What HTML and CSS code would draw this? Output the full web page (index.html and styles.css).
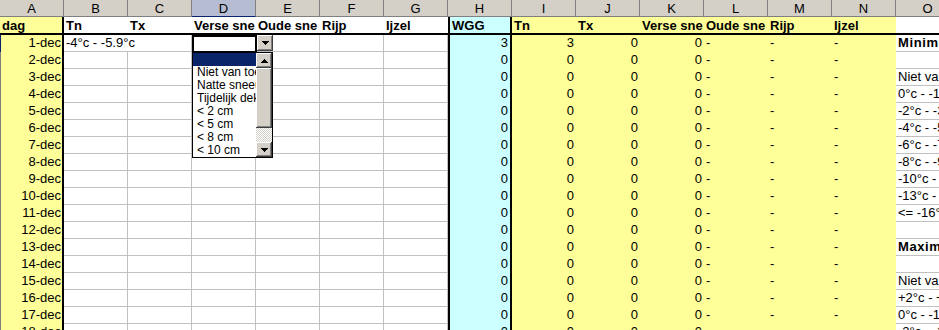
FILE: index.html
```html
<!DOCTYPE html>
<html>
	<head>
		<meta charset=utf-8>
		<title>Sneeuw december</title>
		<link rel="stylesheet" href="styles.css">
	</head>
	<body>
		<div class="sheet">
			<div class="row heads">
				<div class="c">A</div><div class="c">B</div><div class="c">C</div><div class="c on">D</div><div class="c">E</div><div class="c">F</div><div class="c">G</div><div class="c">H</div><div class="c">I</div><div class="c">J</div><div class="c">K</div><div class="c">L</div><div class="c">M</div><div class="c">N</div><div class="c">O</div>
			</div>
			<div class="row labels">
				<div class="c a">dag</div><div class="c">Tn</div><div class="c">Tx</div><div class="c">Verse sne</div><div class="c">Oude sne</div><div class="c">Rijp</div><div class="c">Ijzel</div><div class="c h">WGG</div><div class="c y">Tn</div><div class="c y">Tx</div><div class="c y">Verse sne</div><div class="c y">Oude sne</div><div class="c y">Rijp</div><div class="c y">Ijzel</div><div class="c o"></div>
			</div>

			<div class="row cur"><div class="c a">1-dec</div><div class="c w spill">-4°c - -5.9°c</div><div class="c w"></div><div class="c w"></div><div class="c w"></div><div class="c w"></div><div class="c w"></div><div class="c h">3</div><div class="c y r">3</div><div class="c y r">0</div><div class="c y r">0</div><div class="c y">-</div><div class="c y">-</div><div class="c y">-</div><div class="c o b">Minimumtemperatuur</div></div>
			<div class="row"><div class="c a">2-dec</div><div class="c w"></div><div class="c w"></div><div class="c w"></div><div class="c w"></div><div class="c w"></div><div class="c w"></div><div class="c h">0</div><div class="c y r">0</div><div class="c y r">0</div><div class="c y r">0</div><div class="c y">-</div><div class="c y">-</div><div class="c y">-</div><div class="c o"></div></div>
			<div class="row"><div class="c a">3-dec</div><div class="c w"></div><div class="c w"></div><div class="c w"></div><div class="c w"></div><div class="c w"></div><div class="c w"></div><div class="c h">0</div><div class="c y r">0</div><div class="c y r">0</div><div class="c y r">0</div><div class="c y">-</div><div class="c y">-</div><div class="c y">-</div><div class="c o">Niet van toepassing</div></div>
			<div class="row"><div class="c a">4-dec</div><div class="c w"></div><div class="c w"></div><div class="c w"></div><div class="c w"></div><div class="c w"></div><div class="c w"></div><div class="c h">0</div><div class="c y r">0</div><div class="c y r">0</div><div class="c y r">0</div><div class="c y">-</div><div class="c y">-</div><div class="c y">-</div><div class="c o">0°c - -1.9°c</div></div>
			<div class="row"><div class="c a">5-dec</div><div class="c w"></div><div class="c w"></div><div class="c w"></div><div class="c w"></div><div class="c w"></div><div class="c w"></div><div class="c h">0</div><div class="c y r">0</div><div class="c y r">0</div><div class="c y r">0</div><div class="c y">-</div><div class="c y">-</div><div class="c y">-</div><div class="c o">-2°c - -3.9°c</div></div>
			<div class="row"><div class="c a">6-dec</div><div class="c w"></div><div class="c w"></div><div class="c w"></div><div class="c w"></div><div class="c w"></div><div class="c w"></div><div class="c h">0</div><div class="c y r">0</div><div class="c y r">0</div><div class="c y r">0</div><div class="c y">-</div><div class="c y">-</div><div class="c y">-</div><div class="c o">-4°c - -5.9°c</div></div>
			<div class="row"><div class="c a">7-dec</div><div class="c w"></div><div class="c w"></div><div class="c w"></div><div class="c w"></div><div class="c w"></div><div class="c w"></div><div class="c h">0</div><div class="c y r">0</div><div class="c y r">0</div><div class="c y r">0</div><div class="c y">-</div><div class="c y">-</div><div class="c y">-</div><div class="c o">-6°c - -7.9°c</div></div>
			<div class="row"><div class="c a">8-dec</div><div class="c w"></div><div class="c w"></div><div class="c w"></div><div class="c w"></div><div class="c w"></div><div class="c w"></div><div class="c h">0</div><div class="c y r">0</div><div class="c y r">0</div><div class="c y r">0</div><div class="c y">-</div><div class="c y">-</div><div class="c y">-</div><div class="c o">-8°c - -9.9°c</div></div>
			<div class="row"><div class="c a">9-dec</div><div class="c w"></div><div class="c w"></div><div class="c w"></div><div class="c w"></div><div class="c w"></div><div class="c w"></div><div class="c h">0</div><div class="c y r">0</div><div class="c y r">0</div><div class="c y r">0</div><div class="c y">-</div><div class="c y">-</div><div class="c y">-</div><div class="c o">-10°c - -12.9°c</div></div>
			<div class="row"><div class="c a">10-dec</div><div class="c w"></div><div class="c w"></div><div class="c w"></div><div class="c w"></div><div class="c w"></div><div class="c w"></div><div class="c h">0</div><div class="c y r">0</div><div class="c y r">0</div><div class="c y r">0</div><div class="c y">-</div><div class="c y">-</div><div class="c y">-</div><div class="c o">-13°c - -15.9°c</div></div>
			<div class="row"><div class="c a">11-dec</div><div class="c w"></div><div class="c w"></div><div class="c w"></div><div class="c w"></div><div class="c w"></div><div class="c w"></div><div class="c h">0</div><div class="c y r">0</div><div class="c y r">0</div><div class="c y r">0</div><div class="c y">-</div><div class="c y">-</div><div class="c y">-</div><div class="c o">&lt;= -16°c</div></div>
			<div class="row"><div class="c a">12-dec</div><div class="c w"></div><div class="c w"></div><div class="c w"></div><div class="c w"></div><div class="c w"></div><div class="c w"></div><div class="c h">0</div><div class="c y r">0</div><div class="c y r">0</div><div class="c y r">0</div><div class="c y">-</div><div class="c y">-</div><div class="c y">-</div><div class="c o"></div></div>
			<div class="row"><div class="c a">13-dec</div><div class="c w"></div><div class="c w"></div><div class="c w"></div><div class="c w"></div><div class="c w"></div><div class="c w"></div><div class="c h">0</div><div class="c y r">0</div><div class="c y r">0</div><div class="c y r">0</div><div class="c y">-</div><div class="c y">-</div><div class="c y">-</div><div class="c o b">Maximumtemperatuur</div></div>
			<div class="row"><div class="c a">14-dec</div><div class="c w"></div><div class="c w"></div><div class="c w"></div><div class="c w"></div><div class="c w"></div><div class="c w"></div><div class="c h">0</div><div class="c y r">0</div><div class="c y r">0</div><div class="c y r">0</div><div class="c y">-</div><div class="c y">-</div><div class="c y">-</div><div class="c o"></div></div>
			<div class="row"><div class="c a">15-dec</div><div class="c w"></div><div class="c w"></div><div class="c w"></div><div class="c w"></div><div class="c w"></div><div class="c w"></div><div class="c h">0</div><div class="c y r">0</div><div class="c y r">0</div><div class="c y r">0</div><div class="c y">-</div><div class="c y">-</div><div class="c y">-</div><div class="c o">Niet van toepassing</div></div>
			<div class="row"><div class="c a">16-dec</div><div class="c w"></div><div class="c w"></div><div class="c w"></div><div class="c w"></div><div class="c w"></div><div class="c w"></div><div class="c h">0</div><div class="c y r">0</div><div class="c y r">0</div><div class="c y r">0</div><div class="c y">-</div><div class="c y">-</div><div class="c y">-</div><div class="c o">+2°c - +0.1°c</div></div>
			<div class="row"><div class="c a">17-dec</div><div class="c w"></div><div class="c w"></div><div class="c w"></div><div class="c w"></div><div class="c w"></div><div class="c w"></div><div class="c h">0</div><div class="c y r">0</div><div class="c y r">0</div><div class="c y r">0</div><div class="c y">-</div><div class="c y">-</div><div class="c y">-</div><div class="c o">0°c - -1.9°c</div></div>
			<div class="row"><div class="c a">18-dec</div><div class="c w"></div><div class="c w"></div><div class="c w"></div><div class="c w"></div><div class="c w"></div><div class="c w"></div><div class="c h">0</div><div class="c y r">0</div><div class="c y r">0</div><div class="c y r">0</div><div class="c y">-</div><div class="c y">-</div><div class="c y">-</div><div class="c o">-2°c - -3.9°c</div></div>

			<!-- keuzelijst van cel D3 -->
			<div class="sel"></div>
			<div class="drop"><svg class="arrow" width="7" height="4"><path d="M0 0h7v1H0zM1 1h5v1H1zM2 2h3v1H2zM3 3h1v1H3z"/></svg></div>
			<div class="list">
				<ul class="items">
					<li class="hi"></li>
					<li>Niet van toepassing</li>
					<li>Natte sneeuw</li>
					<li>Tijdelijk dek</li>
					<li>&lt; 2 cm</li>
					<li>&lt; 5 cm</li>
					<li>&lt; 8 cm</li>
					<li>&lt; 10 cm</li>
				</ul>
				<div class="scroll">
					<div class="btn"><svg class="arrow" width="7" height="4"><path d="M3 0h1v1H3zM2 1h3v1H2zM1 2h5v1H1zM0 3h7v1H0z"/></svg></div>
					<div class="thumb"></div>
					<div class="track"></div>
					<div class="btn"><svg class="arrow" width="7" height="4"><path d="M0 0h7v1H0zM1 1h5v1H1zM2 2h3v1H2zM3 3h1v1H3z"/></svg></div>
				</div>
			</div>
		</div>
	</body>
</html>
```

FILE: styles.css
```css
body { margin: 0; overflow: hidden; background: #fff; color: #000; font: 13px "Liberation Sans", Arial, sans-serif; }
.sheet { position: relative; width: 960px; }

/* rijen en cellen */
.row { display: grid; grid-template-columns: repeat(15, 64px); height: 17px; }
.c { box-sizing: border-box; height: 17px; line-height: 16px; padding: 0 2px; overflow: hidden; white-space: nowrap; }

/* kolomkoppen */
.heads .c { background: #d4d0c8; border-right: 1px solid #808080; border-bottom: 1px solid #808080; text-align: center; padding-top: 1px; line-height: 15px; }
.heads .on { background: #b6bdd2; border-bottom-color: #0a246a; }

/* titelrij */
.labels { height: 18px; box-sizing: border-box; border-bottom: 2px solid #000; font-weight: bold; }
.labels .c { height: 16px; line-height: 17px; }

.a { background: #ffff99; border-right: 2px solid #000; text-align: right; padding-right: 1px; box-shadow: inset 1px 0 #808080; }
.labels .a { text-align: left; box-shadow: none; }
.cur .a { box-shadow: inset 1px 0 #0a246a; }
.w { border-right: 1px solid #c0c0c0; border-bottom: 1px solid #c0c0c0; }
.spill { overflow: visible; border-right: 0; }
.h { background: #ccffff; border-left: 2px solid #000; border-right: 2px solid #000; text-align: right; }
.labels .h { text-align: left; }
.y { background: #ffff99; }
.r { text-align: right; }
.o { border-bottom: 1px solid #c0c0c0; overflow: visible; }
.labels .o { border-bottom: 0; }
.b { font-weight: bold; letter-spacing: 0.6px; }

/* keuzelijst */
.sel { position: absolute; left: 192px; top: 35px; width: 65px; height: 18px; box-sizing: border-box; border: 2px solid #000; }
.drop { position: absolute; left: 257px; top: 35px; width: 16px; height: 16px; }
.drop, .btn, .thumb { background: #d4d0c8; box-shadow: inset -1px -1px #404040, inset 1px 1px #fff, inset -2px -2px #808080; }
.drop, .btn { display: flex; align-items: center; justify-content: center; }
.arrow { display: block; shape-rendering: crispEdges; }
.list { position: absolute; left: 192px; top: 52px; width: 81px; height: 106px; box-sizing: border-box; border: 1px solid #000; background: #fff; display: flex; }
.items { flex: 1; margin: 0; padding: 0; list-style: none; font-size: 12px; overflow: hidden; }
.items li { height: 13px; line-height: 13px; padding-left: 4px; white-space: nowrap; overflow: hidden; }
.items .hi { background: #0a246a; }
.scroll { width: 16px; display: flex; flex-direction: column; }
.btn { height: 15px; }
.thumb { height: 60px; }
.track { flex: 1; background: repeating-conic-gradient(#fff 0 25%, #d4d0c8 0 50%) 0 0 / 2px 2px; }
```
